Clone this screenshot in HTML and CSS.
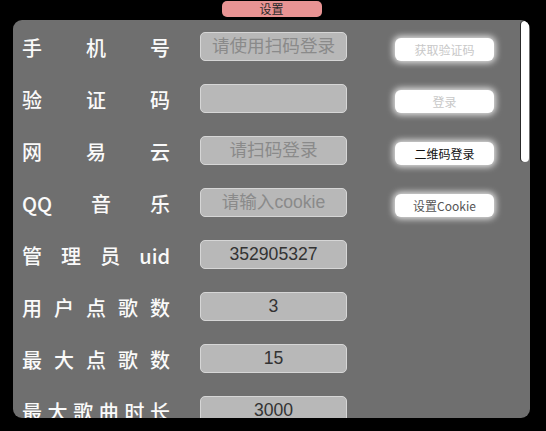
FILE: index.html
```html
<!DOCTYPE html>
<html lang="zh-CN">
<head>
<meta charset="utf-8">
<title>设置</title>
<link rel="stylesheet" href="styles.css">
</head>
<body>
<div class="app">
  <div class="tab">设置</div>
  <div class="panel">
    <div class="settings">
      <div class="row">
        <label class="label">手机号</label>
        <input class="field" placeholder="请使用扫码登录" disabled>
        <button class="btn btn-disabled">获取验证码</button>
      </div>
      <div class="row">
        <label class="label">验证码</label>
        <input class="field" disabled>
        <button class="btn btn-disabled">登录</button>
      </div>
      <div class="row">
        <label class="label">网易云</label>
        <input class="field" placeholder="请扫码登录" disabled>
        <button class="btn btn-dark">二维码登录</button>
      </div>
      <div class="row">
        <label class="label">QQ音乐</label>
        <input class="field" placeholder="请输入cookie">
        <button class="btn btn-mid">设置Cookie</button>
      </div>
      <div class="row">
        <label class="label">管理员uid</label>
        <input class="field" value="352905327">
      </div>
      <div class="row">
        <label class="label">用户点歌数</label>
        <input class="field" value="3">
      </div>
      <div class="row">
        <label class="label">最大点歌数</label>
        <input class="field" value="15">
      </div>
      <div class="row">
        <label class="label">最大歌曲时长</label>
        <input class="field" value="3000">
      </div>
    </div>
    <div class="scroll-thumb"></div>
  </div>
</div>
</body>
</html>
```
FILE: styles.css
```css
html, body {
  margin: 0;
  padding: 0;
  background: #000;
  height: 431px;
  overflow: hidden;
}

.app {
  width: 517px;
  margin-left: 13px;
  display: flex;
  flex-direction: column;
  align-items: center;
  font-family: "Noto Sans CJK SC", "Liberation Sans", sans-serif;
}

.tab {
  width: 100px;
  height: 16px;
  margin-top: 1px;
  background: #e89393;
  border-radius: 5px;
  color: #2a2a2a;
  font-size: 12px;
  line-height: 16px;
  text-align: center;
}

.panel {
  position: relative;
  align-self: stretch;
  margin-top: 3px;
  height: 398px;
  background: #6f6f6f;
  border-radius: 9px;
  overflow: hidden;
  box-sizing: border-box;
}

.scroll-thumb {
  position: absolute;
  top: 1px;
  right: 1px;
  width: 8px;
  height: 141px;
  background: #fff;
  border-radius: 4px;
  box-shadow: -1px 0 0 #2a2a2a;
}

.settings {
  padding: 0 0 0 9px;
}

.row {
  height: 52px;
  display: flex;
  align-items: center;
}

.label {
  width: 148px;
  margin-top: 4px;
  color: #fafafa;
  font-size: 20px;
  font-weight: 500;
  line-height: 26px;
  text-align: justify;
  text-align-last: justify;
  font-family: "Noto Sans CJK SC", "Liberation Sans", sans-serif;
}

.field {
  width: 147px;
  height: 29px;
  margin-left: 30px;
  box-sizing: border-box;
  background: #b8b8b8;
  border: 1.5px solid #d6d6d6;
  border-radius: 5px;
  color: #333;
  font-size: 17.6px;
  font-family: "Liberation Sans", "Noto Sans CJK SC", sans-serif;
  text-align: center;
  padding: 0 4px;
  outline: none;
}

.field::placeholder {
  color: #8a8a8a;
  font-family: "Liberation Sans", "Noto Sans CJK SC", sans-serif;
}

.btn {
  width: 99px;
  height: 23px;
  margin-left: 48px;
  margin-top: 7px;
  background: #fff;
  border: none;
  border-radius: 6px;
  box-shadow: 0 0 6px 2px rgba(255, 255, 255, 0.8);
  font-size: 12px;
  font-family: "Noto Sans CJK SC", "Liberation Sans", sans-serif;
  padding: 0;
}

.btn-disabled {
  color: #c8c8c8;
}

.btn-dark {
  color: #111;
}

.btn-mid {
  color: #555;
}
```
